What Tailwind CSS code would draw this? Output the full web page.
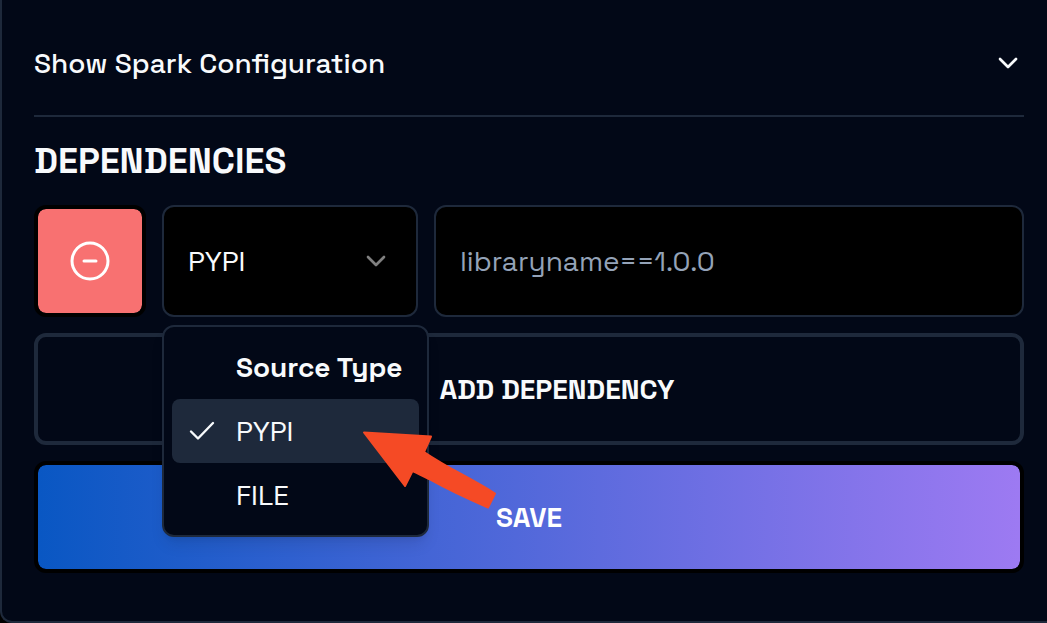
<!DOCTYPE html>
<html lang="en" class="bg-black">
<head>
  <meta charset="UTF-8" />
  <meta name="viewport" content="width=device-width, initial-scale=1.0" />
  <title>Dependencies</title>
  <script src="https://cdn.jsdelivr.net/npm/@tailwindcss/browser@4"></script>
</head>
<body class="bg-black font-['Space_Grotesk','Inter',sans-serif] text-[28px] leading-10 text-slate-50">
  <form class="rounded-bl-xl border-b-2 border-l-2 border-[#1e293b] bg-[#020817] pt-[11px] pr-[23px] pb-12 pl-8">
    <button type="button" aria-expanded="false" class="flex w-full items-center justify-between py-8 text-left font-medium">
      Show Spark Configuration
      <svg class="size-8" viewBox="0 0 24 24" fill="none" stroke="currentColor" stroke-width="2" stroke-linecap="round" stroke-linejoin="round" aria-hidden="true">
        <path d="m6 9 6 6 6-6" />
      </svg>
    </button>

    <section class="border-t-2 border-[#1e293b] pt-6">
      <h2 class="text-4xl leading-10 font-bold">DEPENDENCIES</h2>

      <div class="mt-6 flex gap-4">
        <button type="button" aria-label="Remove dependency" class="flex size-28 shrink-0 items-center justify-center rounded-xl border-4 border-black bg-[#f87171] bg-clip-padding text-white">
          <svg class="size-12" viewBox="0 0 24 24" fill="none" stroke="currentColor" stroke-width="1.5" stroke-linecap="round" aria-hidden="true">
            <circle cx="12" cy="12" r="9" />
            <path d="M9 12h6" />
          </svg>
        </button>

        <div class="relative w-64 shrink-0">
          <select aria-label="Source Type" class="h-28 w-full appearance-none rounded-xl border-2 border-[#1e293b] bg-black px-6 text-slate-50">
            <option>PYPI</option>
            <option>FILE</option>
          </select>
          <svg class="pointer-events-none absolute top-10 right-[26px] size-8 text-[#808080]" viewBox="0 0 24 24" fill="none" stroke="currentColor" stroke-width="2" stroke-linecap="round" stroke-linejoin="round" aria-hidden="true">
            <path d="m6 9 6 6 6-6" />
          </svg>

          <!-- open source type menu -->
          <div role="listbox" aria-label="Source Type" class="absolute top-[120px] left-0 z-10 w-[267px] rounded-xl border-2 border-[#1e293b] bg-[#020817] p-2 shadow-lg">
            <div class="flex h-16 items-center pl-16 font-semibold whitespace-nowrap">Source Type</div>
            <button type="button" role="option" aria-selected="true" class="flex h-16 w-full items-center rounded-lg bg-[#1e293b] pl-4">
              <svg class="mr-5 size-7" viewBox="0 0 28 28" fill="none" stroke="currentColor" stroke-width="2.4" stroke-linecap="round" stroke-linejoin="round" aria-hidden="true">
                <path d="M3 14.5l7 7L25 6" />
              </svg>
              PYPI
            </button>
            <button type="button" role="option" aria-selected="false" class="flex h-16 w-full items-center rounded-lg pl-16">FILE</button>
          </div>

          <!-- pointer arrow -->
          <svg class="pointer-events-none absolute top-[225px] left-[200px] z-20 h-20 w-[135px]" viewBox="0 0 135 80" fill="#f54a25" stroke="#f54a25" stroke-width="2" stroke-linejoin="round" aria-hidden="true">
            <path d="M2 2.500L69 6.500L62 22Q77 32 99 44T133 63.500L126 77.500Q92 63 67 49Q57 44 50.500 41L43 56Z" />
          </svg>
        </div>

        <input type="text" aria-label="Library" placeholder="libraryname==1.0.0" class="h-28 w-full min-w-0 rounded-xl border-2 border-[#1e293b] bg-black px-6 placeholder:text-[#94a3b8]" />
      </div>

      <button type="button" class="mt-4 flex h-28 w-full items-center justify-center gap-2 rounded-xl border-4 border-[#1e293b] font-semibold">
        <svg class="size-12" viewBox="0 0 24 24" fill="none" stroke="currentColor" stroke-width="1.5" stroke-linecap="round" aria-hidden="true">
          <circle cx="12" cy="12" r="9" />
          <path d="M9 12h6M12 9v6" />
        </svg>
        ADD DEPENDENCY
      </button>
      <button type="submit" class="mt-4 h-28 w-full rounded-xl border-4 border-black bg-linear-to-r/srgb from-[#0957c3] to-[#9d7af2] bg-clip-padding font-semibold text-white">
        SAVE
      </button>
    </section>
  </form>
</body>
</html>
